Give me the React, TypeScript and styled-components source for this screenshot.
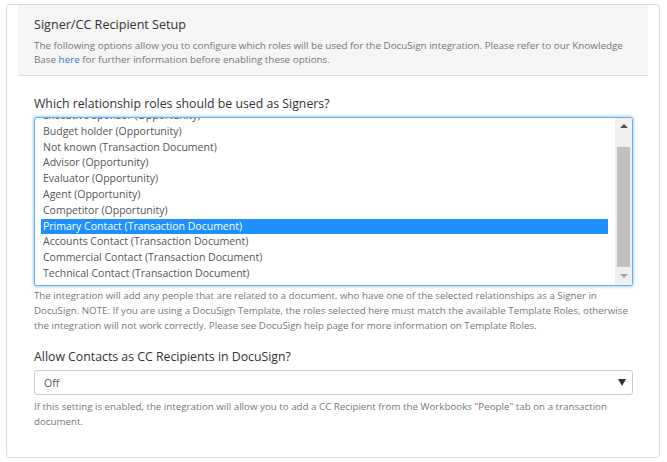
import React from 'react';
import styled, { createGlobalStyle } from 'styled-components';

const GlobalStyle = createGlobalStyle`
  html, body {
    margin: 0;
    padding: 0;
    background: #fff;
  }
  body {
    font-family: "Open Sans", "Noto Sans", Arial, sans-serif;
    color: #333;
  }
`

const Card = styled.div`
  margin: 4px 0 0 6px;
  width: 654px;
  height: 454px;
  box-sizing: border-box;
  border: 1px solid #dcdcdc;
  border-radius: 4px;
  padding: 0 11px;
`

const Header = styled.div`
  background: #f5f5f5;
  border-bottom: 1px solid #dddddd;
  padding: 10px 16px 0;
  height: 71px;
  box-sizing: border-box;
`

const Title = styled.div`
  font-size: 12.6px;
  line-height: 20px;
  color: #333;
`

const Intro = styled.p`
  margin: 3px 0 0;
  font-size: 9.85px;
  line-height: 14px;
  color: #777;
`

const Link = styled.a`
  color: #2f7bd6;
  text-decoration: none;
`

const Body = styled.div`
  padding: 18px 15px 0 16px;
`

const Label = styled.div<{ $gap?: number }>`
  font-size: 12.3px;
  line-height: 20px;
  color: #333;
  margin-top: ${p => p.$gap ?? 0}px;
  margin-bottom: 3px;
`

const ListBox = styled.div`
  display: flex;
  height: 169px;
  box-sizing: border-box;
  border: 1px solid #66afe9;
  border-radius: 3px;
  box-shadow: 0 0 3px 1px rgba(102, 175, 233, 0.55);
  overflow: hidden;
  background: #fff;
`

const Options = styled.div`
  flex: 1;
  overflow: hidden;
  padding: 0 7px 0 6px;
`

const OptionTrack = styled.div`
  margin-top: -10px;
`

const Option = styled.div<{ $selected?: boolean }>`
  height: 15.8px;
  line-height: 15.8px;
  font-size: 10.5px;
  padding-left: 2px;
  white-space: nowrap;
  color: ${p => (p.$selected ? '#fff' : '#555')};
  background: ${p => (p.$selected ? '#1e90ff' : 'transparent')};
`

const ScrollBar = styled.div`
  width: 17px;
  background: #f0f0f0;
  display: flex;
  flex-direction: column;
  align-items: center;
`

const Arrow = styled.div<{ $down?: boolean }>`
  height: 17px;
  width: 17px;
  display: flex;
  align-items: center;
  justify-content: center;
  color: ${p => (p.$down ? '#a3a3a3' : '#505050')};
`

const Thumb = styled.div`
  width: 13px;
  height: 120px;
  margin-top: 12px;
  background: #c1c1c1;
`

const Spacer = styled.div`
  flex: 1;
`

const Help = styled.p<{ $gap?: number }>`
  margin: ${p => p.$gap ?? 2}px 0 0;
  font-size: 9.75px;
  line-height: 15px;
  color: #777;
`

const SelectBox = styled.div`
  height: 25px;
  box-sizing: border-box;
  border: 1px solid #cccccc;
  border-radius: 3px;
  display: flex;
  align-items: center;
  justify-content: space-between;
  padding: 0 6px 0 9px;
  font-size: 10.5px;
  color: #555;
`

const Caret = styled.svg`
  width: 8px;
  height: 7px;
`

const roles = [
  'Executive sponsor (Opportunity)',
  'Budget holder (Opportunity)',
  'Not known (Transaction Document)',
  'Advisor (Opportunity)',
  'Evaluator (Opportunity)',
  'Agent (Opportunity)',
  'Competitor (Opportunity)',
  'Primary Contact (Transaction Document)',
  'Accounts Contact (Transaction Document)',
  'Commercial Contact (Transaction Document)',
  'Technical Contact (Transaction Document)',
]

const Triangle = ({ down }: { down?: boolean }) => (
  <svg width="8" height="5" viewBox="0 0 8 5">
    <path d={down ? 'M0 0H8L4 4Z' : 'M4 0L8 4H0Z'} fill="currentColor" />
  </svg>
)

export default function App() {
  return (
    <>
      <GlobalStyle />
      <Card>
        <Header>
          <Title>Signer/CC Recipient Setup</Title>
          <Intro>
            The following options allow you to configure which roles will be used for the DocuSign integration. Please refer to our Knowledge
            <br />
            Base <Link href="#">here</Link> for further information before enabling these options.
          </Intro>
        </Header>
        <Body>
          <Label>Which relationship roles should be used as Signers?</Label>
          <ListBox>
            <Options>
              <OptionTrack>
                {roles.map(r => (
                  <Option key={r} $selected={r.startsWith('Primary')}>{r}</Option>
                ))}
              </OptionTrack>
            </Options>
            <ScrollBar>
              <Arrow><Triangle /></Arrow>
              <Thumb />
              <Spacer />
              <Arrow $down><Triangle down /></Arrow>
            </ScrollBar>
          </ListBox>
          <Help>
            The integration will add any people that are related to a document, who have one of the selected relationships as a Signer in
            DocuSign. NOTE: If you are using a DocuSign Template, the roles selected here must match the available Template Roles, otherwise
            the integration will not work correctly. Please see DocuSign help page for more information on Template Roles.
          </Help>
          <Label $gap={14}>Allow Contacts as CC Recipients in DocuSign?</Label>
          <SelectBox>
            <span>Off</span>
            <Caret viewBox="0 0 8 7">
              <path d="M0 0H8L4 7Z" fill="#333" />
            </Caret>
          </SelectBox>
          <Help $gap={4}>
            If this setting is enabled, the integration will allow you to add a CC Recipient from the Workbooks "People" tab on a transaction
            document.
          </Help>
        </Body>
      </Card>
    </>
  )
}
